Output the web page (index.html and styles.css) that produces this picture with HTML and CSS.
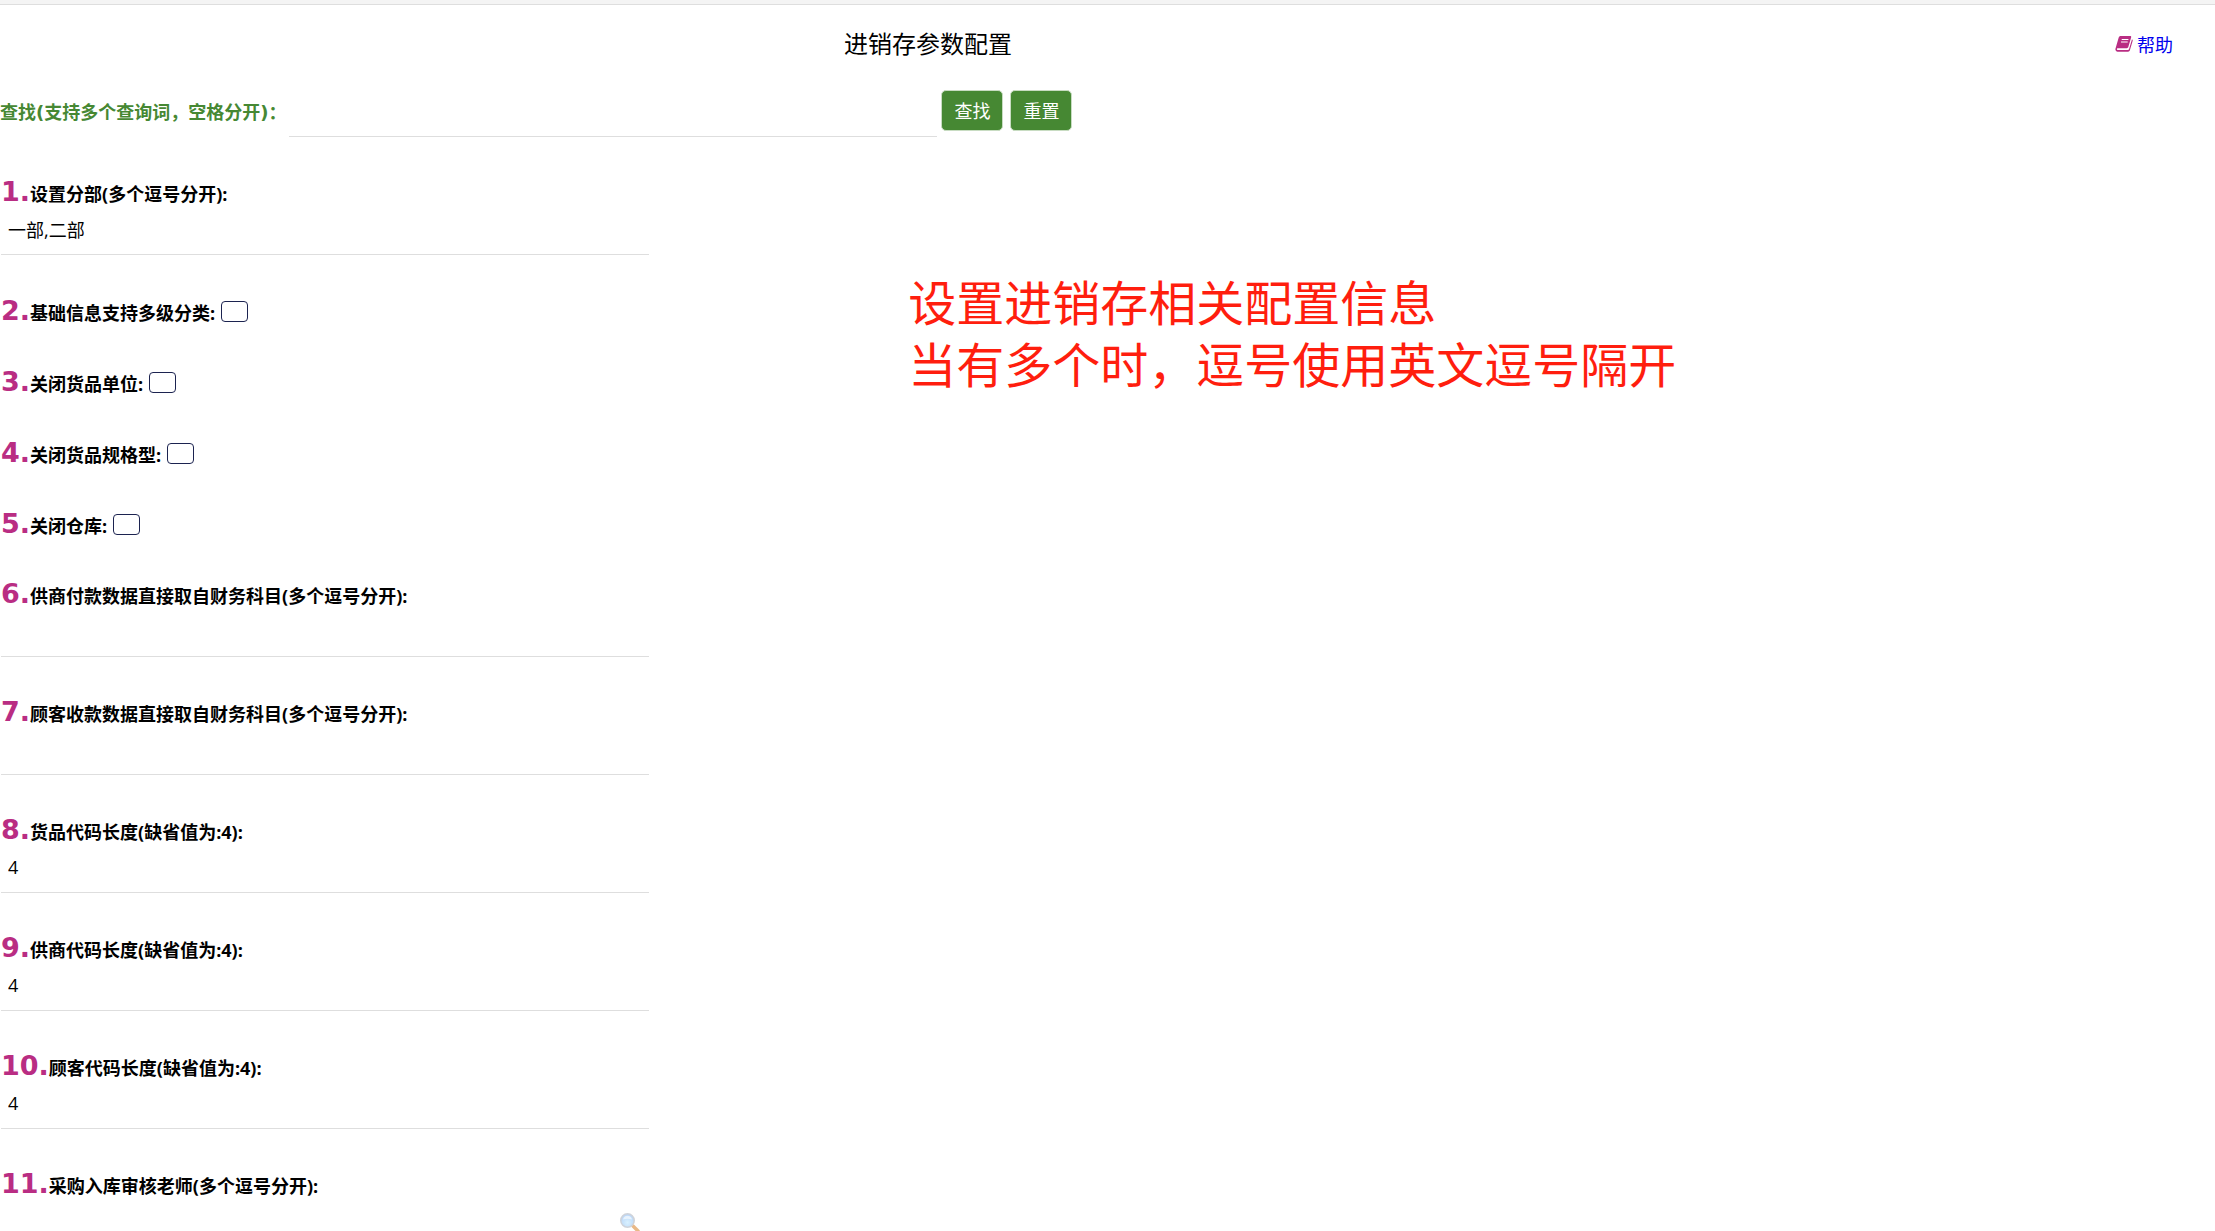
FILE: index.html
```
<!DOCTYPE html>
<html lang="zh-CN">
<head>
    <meta charset="UTF-8">
    <meta name="viewport" content="width=device-width, initial-scale=1.0">
    <title>进销存参数配置</title>
    <link rel="stylesheet" href="styles.css">
</head>
<body>
    <div class="page">
        <div class="topbar"></div>
        <header class="header">
            <h1 class="title">进销存参数配置</h1>
            <a class="help" href="#">
                <svg class="help-icon" viewBox="0 0 18 18" aria-hidden="true">
                    <path fill="#b92d83" d="M5.6 1h9.6c.8 0 1.2.6 1 1.300l-2.900 9.800c-.2.700-.8 1.100-1.500 1.100H2.900c-.8 0-1.200.600-.9 1.200.1.400.5.600 1 .6h9.900c.5 0 .9-.3 1.100-.800L17 4.300c.7.400.9.900.7 1.500l-2.900 9.700c-.2.700-.9 1.200-1.600 1.200H2.600C1.300 16.700.2 15.500.4 14.100L3.700 2.600C4 1.600 4.700 1 5.600 1z"/>
                    <path stroke="#fff" stroke-width="1.100" d="M6.700 4.500h6.700M6 7h6.700"/>
                </svg>
                帮助
            </a>
        </header>

        <form class="search">
            <label class="search-label" for="keyword">查找(支持多个查询词，空格分开)：</label>
            <input type="text" class="text-input" id="keyword" name="keyword">
            <div class="search-buttons">
                <button type="button" class="btn">查找</button>
                <button type="reset" class="btn">重置</button>
            </div>
        </form>

        <form class="settings">
            <div class="field">
                <label for="p1"><span class="num">1.</span>设置分部(多个逗号分开):</label>
                <input type="text" class="text-input" id="p1" value="一部,二部">
            </div>
            <div class="field field-check">
                <label for="p2"><span class="num">2.</span>基础信息支持多级分类:</label>
                <input type="checkbox" class="check" id="p2">
            </div>
            <div class="field field-check">
                <label for="p3"><span class="num">3.</span>关闭货品单位:</label>
                <input type="checkbox" class="check" id="p3">
            </div>
            <div class="field field-check">
                <label for="p4"><span class="num">4.</span>关闭货品规格型:</label>
                <input type="checkbox" class="check" id="p4">
            </div>
            <div class="field field-check">
                <label for="p5"><span class="num">5.</span>关闭仓库:</label>
                <input type="checkbox" class="check" id="p5">
            </div>
            <div class="field">
                <label for="p6"><span class="num">6.</span>供商付款数据直接取自财务科目(多个逗号分开):</label>
                <input type="text" class="text-input" id="p6">
            </div>
            <div class="field">
                <label for="p7"><span class="num">7.</span>顾客收款数据直接取自财务科目(多个逗号分开):</label>
                <input type="text" class="text-input" id="p7">
            </div>
            <div class="field">
                <label for="p8"><span class="num">8.</span>货品代码长度(缺省值为:4):</label>
                <input type="text" class="text-input" id="p8" value="4">
            </div>
            <div class="field">
                <label for="p9"><span class="num">9.</span>供商代码长度(缺省值为:4):</label>
                <input type="text" class="text-input" id="p9" value="4">
            </div>
            <div class="field">
                <label for="p10"><span class="num">10.</span>顾客代码长度(缺省值为:4):</label>
                <input type="text" class="text-input" id="p10" value="4">
            </div>
            <div class="field">
                <label for="p11"><span class="num">11.</span>采购入库审核老师(多个逗号分开):</label>
                <input type="text" class="text-input" id="p11">
                <button type="button" class="pick" aria-label="选择">
                    <svg viewBox="0 0 22 22" aria-hidden="true">
                        <defs>
                            <radialGradient id="lens" cx="50%" cy="65%" r="60%">
                                <stop offset="0" stop-color="#d9f1ff"/>
                                <stop offset="1" stop-color="#b9d6f8"/>
                            </radialGradient>
                        </defs>
                        <path stroke="#e9b987" stroke-width="3.500" stroke-linecap="round" d="M14 14l5 5"/>
                        <circle cx="8.500" cy="8.500" r="6.700" fill="url(#lens)" stroke="#cfd3da" stroke-width="1.600"/>
                        <path fill="#fff" opacity=".6" d="M4 7.500a4.600 4.600 0 0 1 9 0q-4.500-1.500-9 0z"/>
                    </svg>
                </button>
            </div>
        </form>

        <p class="note">设置进销存相关配置信息<br>当有多个时，逗号使用英文逗号隔开</p>
    </div>
</body>
</html>
```
FILE: styles.css
```
* {
    box-sizing: border-box;
}
body {
    margin: 0;
    background-color: #fff;
    color: #000;
    font-family: "Open Sans", "Noto Sans CJK SC", sans-serif;
    font-size: 18px;
}
.page {
    position: relative;
    height: 100vh;
    overflow-y: auto;
    scrollbar-width: none;
}
.topbar {
    height: 5px;
    background-color: #f4f4f4;
    border-bottom: 1px solid #dedede;
}

/* header */
.header {
    display: grid;
    grid-template-columns: 1856fr 359fr;
    align-items: center;
    height: 78px;
    margin-bottom: 5px;
}
.title {
    margin: 0;
    padding-bottom: 4px;
    font-size: 24px;
    font-weight: normal;
    text-align: center;
}
.help {
    display: flex;
    align-items: center;
    justify-content: flex-end;
    gap: 4px;
    padding-right: 42px;
    color: #0000ee;
    text-decoration: none;
}
.help-icon {
    width: 18px;
    height: 18px;
}

/* inputs */
.text-input {
    display: block;
    width: 648px;
    height: 49px;
    padding: 0 7px 3px;
    border: none;
    border-bottom: 1px solid #dedede;
    background: none;
    color: #000;
    font: inherit;
    outline: none;
}
.check {
    appearance: none;
    width: 27px;
    height: 21px;
    margin: 0;
    border: 1px solid #1c2350;
    border-radius: 4px;
    background-color: #fff;
}
.check:checked {
    background-color: #468833;
}

/* search */
.search {
    display: flex;
    align-items: center;
}
.search-label {
    padding: 0 3px 4px 0;
    color: #468833;
    font-family: "DejaVu Sans", "Noto Sans CJK SC", sans-serif;
    font-weight: bold;
}
.search-buttons {
    display: flex;
    gap: 7px;
    margin-left: 4px;
    padding-bottom: 4px;
}
.btn {
    height: 41px;
    padding: 0 12px 2px;
    border: 1px solid #c8dcc2;
    border-radius: 5px;
    background-color: #468833;
    color: #fff;
    font: inherit;
    cursor: pointer;
}
.btn:hover {
    background-color: #3a722a;
}

/* settings */
.settings {
    display: flex;
    flex-direction: column;
    gap: 41px;
    padding: 41px 1px;
}
.field {
    position: relative;
    width: 648px;
}
.field label {
    display: flex;
    align-items: baseline;
    height: 28px;
    font-weight: bold;
    line-height: 28px;
}
.field-check {
    display: flex;
    align-items: center;
    gap: 6px;
    height: 30px;
}
.num {
    color: #b92d83;
    font-family: "DejaVu Sans", sans-serif;
    font-size: 27px;
}
.pick {
    position: absolute;
    right: 8px;
    bottom: 13px;
    width: 22px;
    height: 22px;
    padding: 0;
    border: none;
    background: none;
    cursor: pointer;
}
.pick svg {
    display: block;
}

.note {
    position: absolute;
    top: 272px;
    left: 41%;
    margin: 0;
    color: #ff1e0e;
    font-size: 48px;
    line-height: 62px;
}
```
